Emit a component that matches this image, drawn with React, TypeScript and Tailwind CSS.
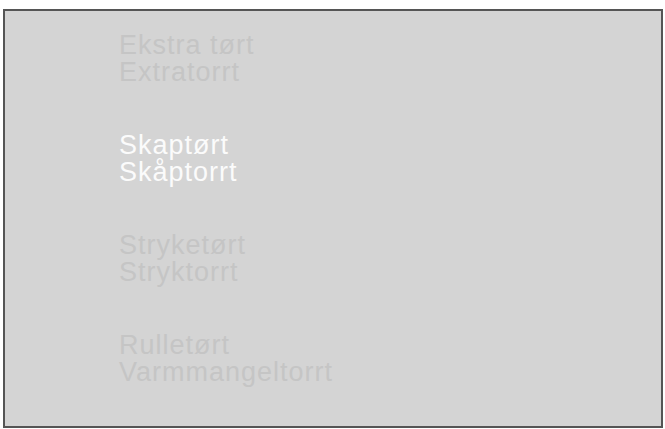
import React from 'react';

const programs = [
    { no: 'Ekstra tørt', sv: 'Extratorrt', active: false },
    { no: 'Skaptørt', sv: 'Skåptorrt', active: true },
    { no: 'Stryketørt', sv: 'Stryktorrt', active: false },
    { no: 'Rulletørt', sv: 'Varmmangeltorrt', active: false },
];

export default function App() {
    return (
        <div className="w-[665px] h-[429px] bg-white pt-[9px] pl-[3px] overflow-hidden">
            <div className="w-[660px] h-[419px] border-2 border-[#555555] bg-[#d4d4d4] pl-[114px] pt-[21px]">
                <div className="flex flex-col gap-[46px] font-['Liberation_Sans',Arial,sans-serif] text-[27px] leading-[27px] tracking-[1px]">
                    {programs.map((p) => (
                        <div
                            key={p.no}
                            className={p.active ? 'text-[#fbfbfb]' : 'text-[#c5c5c5]'}
                        >
                            <div>{p.no}</div>
                            <div>{p.sv}</div>
                        </div>
                    ))}
                </div>
            </div>
        </div>
    );
}
